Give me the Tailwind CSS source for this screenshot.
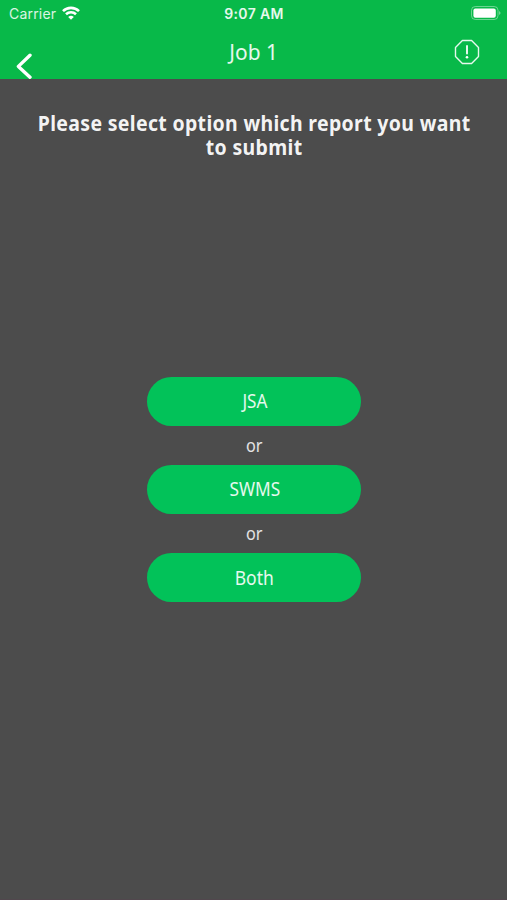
<!DOCTYPE html>
<html lang="en">
<head>
    <meta charset="UTF-8">
    <meta name="viewport" content="width=device-width, initial-scale=1.0">
    <script src="https://cdn.jsdelivr.net/npm/@tailwindcss/browser@4"></script>
    <title>Job 1</title>
</head>
<body class="bg-[#4c4c4c]">
    <div class="flex flex-col w-full h-[900px] overflow-hidden bg-[#4c4c4c] border-b border-[#51474d] font-['Noto_Sans',sans-serif] text-white">
        <header class="h-[79px] shrink-0 bg-[#08b949]">
            <div class="grid grid-cols-3 items-center h-[26px] pl-[9px] pr-[6px] font-['Inter',sans-serif]">
                <div class="flex items-center gap-[6px]">
                    <span class="text-[14px] tracking-[0.2px] text-white/85">Carrier</span>
                    <svg class="w-[18px] h-[14px]" viewBox="0 0 18 14" fill="none" stroke="white" stroke-width="2.6">
                        <path d="M1 5.1a11.5 11.5 0 0 1 16 0"/>
                        <path d="M4 8.3a7.2 7.2 0 0 1 10 0"/>
                        <path d="M9 13.8 6.2 11a4 4 0 0 1 5.6 0z" fill="white" stroke="none"/>
                    </svg>
                </div>
                <div class="pr-[2px] text-center text-[14px] font-semibold tracking-[0.35px] whitespace-nowrap text-white/90">9:07 AM</div>
                <svg class="w-[30px] h-[14px] justify-self-end" viewBox="0 0 30 14">
                    <rect x="0.5" y="0.5" width="26.5" height="13" rx="3.8" fill="none" stroke="white" stroke-opacity="0.4"/>
                    <rect x="2.4" y="2.4" width="22.4" height="9.4" rx="2" fill="white"/>
                    <path d="M28 5v4q1.6-.8 1.6-2t-1.6-2z" fill="white" fill-opacity="0.4"/>
                </svg>
            </div>
            <div class="grid grid-cols-3 h-[53px] pt-[2px] pl-4 pr-[27px]">
                <button class="w-4 h-7 mt-[23px]" aria-label="Back">
                    <svg class="w-4 h-7" viewBox="0 0 16 28" fill="none" stroke="white" stroke-width="3.4" stroke-linecap="round" stroke-linejoin="round">
                        <path d="M14 4.2 2.4 15.4 14 26.2"/>
                    </svg>
                </button>
                <h1 class="pt-2 pl-[11px] text-center text-[22px] leading-[30px] text-white/90"><span class="inline-block scale-x-[0.95]">Job 1</span></h1>
                <button class="w-[26px] h-[26px] mt-[11px] justify-self-end" aria-label="Report">
                    <svg class="w-[26px] h-[26px]" viewBox="0 0 26 26" fill="none" stroke="white" stroke-opacity="0.9" stroke-width="1.4" stroke-linejoin="round">
                        <path d="M8.4 1.5h9.2l6.9 6.9v9.2l-6.9 6.9H8.4l-6.9-6.9V8.4z"/>
                        <path d="M13 7v7.6" stroke-width="2" stroke-linecap="round"/>
                        <circle cx="13" cy="18.3" r="1.3" fill="white" stroke="none"/>
                    </svg>
                </button>
            </div>
        </header>

        <h2 class="flex justify-center mt-[32px] h-12 pl-[2px] text-center text-[21px] leading-6 font-bold whitespace-nowrap text-white/95"><span class="inline-block scale-x-[0.928] tracking-[0.35px]">Please select option which report you want<br>to submit</span></h2>

        <div class="flex flex-col items-center mt-[218px] text-[19px]">
            <button class="w-[214px] h-[49px] pl-[2px] rounded-full bg-[#02c259] text-white/90"><span class="inline-block scale-x-[0.9]">JSA</span></button>
            <p class="h-[39px] pl-[2px] leading-[38px] text-[18px] text-white/85"><span class="inline-block scale-x-[0.9]">or</span></p>
            <button class="w-[214px] h-[49px] pl-[2px] rounded-full bg-[#02c259] text-white/90"><span class="inline-block scale-x-[0.91]">SWMS</span></button>
            <p class="h-[39px] pl-[2px] leading-[38px] text-[18px] text-white/85"><span class="inline-block scale-x-[0.9]">or</span></p>
            <button class="w-[214px] h-[49px] pl-[2px] pt-px rounded-full bg-[#02c259] text-white/90"><span class="inline-block scale-x-[0.92]">Both</span></button>
        </div>
    </div>
</body>
</html>
